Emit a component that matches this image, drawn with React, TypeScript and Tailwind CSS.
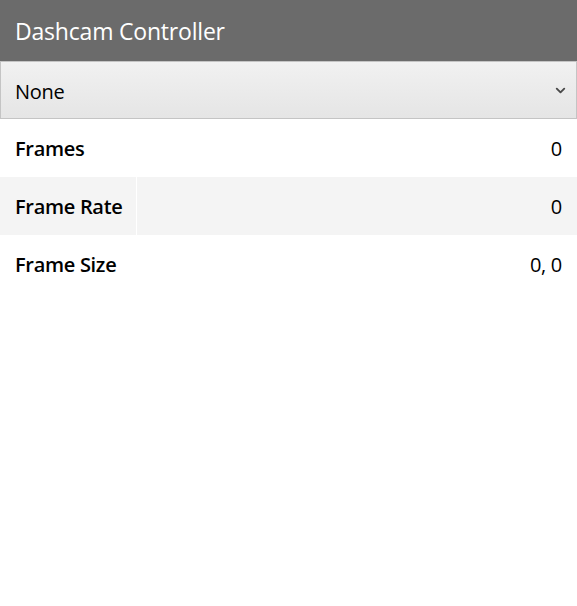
import { ChevronDown } from 'lucide-react'

const ROWS = [
  { label: 'Frames', value: '0' },
  { label: 'Frame Rate', value: '0' },
  { label: 'Frame Size', value: '0, 0' },
]

export default function App() {
  return (
    <div className="min-h-[606px] bg-white text-black" style={{ fontFamily: '"Open Sans", "Noto Sans", sans-serif' }}>
      <header className="h-[61px] bg-[#6b6b6b] flex items-center px-[15px] pt-[2px]">
        <h1 className="text-[23px] text-white font-normal tracking-[-0.2px]">Dashcam Controller</h1>
      </header>

      <div className="relative h-[58px] border border-[#c4c4c4] bg-gradient-to-b from-[#f1f1f1] to-[#e5e5e5] flex items-center px-[14px] pt-[3px]">
        <span className="text-[20px] tracking-[-0.3px]">None</span>
        <ChevronDown size={15} strokeWidth={3} className="absolute right-[8px] top-[21px] text-[#4a4a4a]" />
      </div>

      <table className="w-full border-collapse">
        <tbody>
          {ROWS.map((row, i) => (
            <tr key={row.label} className={i % 2 === 1 ? 'bg-[#f4f4f4]' : 'bg-white'}>
              <td className="h-[58px] w-[136px] pl-[15px] pt-[2px] text-[20px] font-semibold tracking-[-0.3px] border-r border-white">
                {row.label}
              </td>
              <td className="h-[58px] pr-[15px] pt-[2px] text-right text-[20px] tracking-[-0.3px]">{row.value}</td>
            </tr>
          ))}
        </tbody>
      </table>
    </div>
  )
}
